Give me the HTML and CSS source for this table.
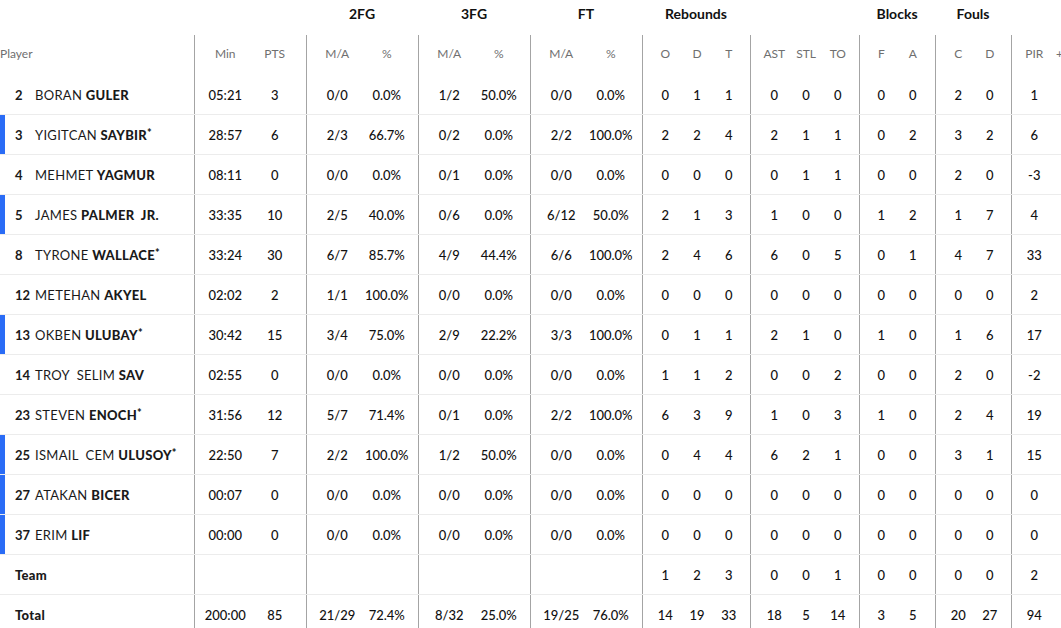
FILE: index.html
```html
<!DOCTYPE html>
<html>
<head>
<meta charset="utf-8">
<link rel="stylesheet" href="styles.css">
</head>
<body>
<table class="box">
  <colgroup>
    <col class="c-player">
    <col class="c-wide"><col class="c-wide">
    <col class="c-wide"><col class="c-wide">
    <col class="c-wide"><col class="c-wide">
    <col class="c-wide"><col class="c-wide">
    <col class="c-39"><col class="c-32"><col class="c-37">
    <col class="c-40"><col class="c-32"><col class="c-37">
    <col class="c-38"><col class="c-38">
    <col class="c-39"><col class="c-37">
    <col class="c-39"><col class="c-11">
  </colgroup>
  <thead>
    <tr class="groups">
      <th></th>
      <th colspan="2"></th>
      <th colspan="2">2FG</th>
      <th colspan="2">3FG</th>
      <th colspan="2">FT</th>
      <th colspan="3">Rebounds</th>
      <th colspan="3"></th>
      <th colspan="2">Blocks</th>
      <th colspan="2">Fouls</th>
      <th colspan="2"></th>
    </tr>
    <tr class="subs">
      <th class="player-head">Player</th>
      <th>Min</th><th>PTS</th>
      <th>M/A</th><th>%</th>
      <th>M/A</th><th>%</th>
      <th>M/A</th><th>%</th>
      <th>O</th><th>D</th><th>T</th>
      <th>AST</th><th>STL</th><th>TO</th>
      <th>F</th><th>A</th>
      <th>C</th><th>D</th>
      <th>PIR</th><th class="pm">+</th>
    </tr>
  </thead>
  <tbody>
    <tr>
      <td class="player"><span class="num">2</span>BORAN <b>GULER</b></td>
      <td>05:21</td><td>3</td><td>0/0</td><td>0.0%</td><td>1/2</td><td>50.0%</td><td>0/0</td><td>0.0%</td>
      <td>0</td><td>1</td><td>1</td><td>0</td><td>0</td><td>0</td><td>0</td><td>0</td><td>2</td><td>0</td><td>1</td><td></td>
    </tr>
    <tr>
      <td class="player starter"><span class="num">3</span>YIGITCAN <b>SAYBIR<sup>*</sup></b></td>
      <td>28:57</td><td>6</td><td>2/3</td><td>66.7%</td><td>0/2</td><td>0.0%</td><td>2/2</td><td>100.0%</td>
      <td>2</td><td>2</td><td>4</td><td>2</td><td>1</td><td>1</td><td>0</td><td>2</td><td>3</td><td>2</td><td>6</td><td></td>
    </tr>
    <tr>
      <td class="player"><span class="num">4</span>MEHMET <b>YAGMUR</b></td>
      <td>08:11</td><td>0</td><td>0/0</td><td>0.0%</td><td>0/1</td><td>0.0%</td><td>0/0</td><td>0.0%</td>
      <td>0</td><td>0</td><td>0</td><td>0</td><td>1</td><td>1</td><td>0</td><td>0</td><td>2</td><td>0</td><td>-3</td><td></td>
    </tr>
    <tr>
      <td class="player starter"><span class="num">5</span>JAMES <b>PALMER&nbsp; JR.</b></td>
      <td>33:35</td><td>10</td><td>2/5</td><td>40.0%</td><td>0/6</td><td>0.0%</td><td>6/12</td><td>50.0%</td>
      <td>2</td><td>1</td><td>3</td><td>1</td><td>0</td><td>0</td><td>1</td><td>2</td><td>1</td><td>7</td><td>4</td><td></td>
    </tr>
    <tr>
      <td class="player"><span class="num">8</span>TYRONE <b>WALLACE<sup>*</sup></b></td>
      <td>33:24</td><td>30</td><td>6/7</td><td>85.7%</td><td>4/9</td><td>44.4%</td><td>6/6</td><td>100.0%</td>
      <td>2</td><td>4</td><td>6</td><td>6</td><td>0</td><td>5</td><td>0</td><td>1</td><td>4</td><td>7</td><td>33</td><td></td>
    </tr>
    <tr>
      <td class="player"><span class="num">12</span>METEHAN <b>AKYEL</b></td>
      <td>02:02</td><td>2</td><td>1/1</td><td>100.0%</td><td>0/0</td><td>0.0%</td><td>0/0</td><td>0.0%</td>
      <td>0</td><td>0</td><td>0</td><td>0</td><td>0</td><td>0</td><td>0</td><td>0</td><td>0</td><td>0</td><td>2</td><td></td>
    </tr>
    <tr>
      <td class="player starter"><span class="num">13</span>OKBEN <b>ULUBAY<sup>*</sup></b></td>
      <td>30:42</td><td>15</td><td>3/4</td><td>75.0%</td><td>2/9</td><td>22.2%</td><td>3/3</td><td>100.0%</td>
      <td>0</td><td>1</td><td>1</td><td>2</td><td>1</td><td>0</td><td>1</td><td>0</td><td>1</td><td>6</td><td>17</td><td></td>
    </tr>
    <tr>
      <td class="player"><span class="num">14</span>TROY&nbsp; SELIM <b>SAV</b></td>
      <td>02:55</td><td>0</td><td>0/0</td><td>0.0%</td><td>0/0</td><td>0.0%</td><td>0/0</td><td>0.0%</td>
      <td>1</td><td>1</td><td>2</td><td>0</td><td>0</td><td>2</td><td>0</td><td>0</td><td>2</td><td>0</td><td>-2</td><td></td>
    </tr>
    <tr>
      <td class="player"><span class="num">23</span>STEVEN <b>ENOCH<sup>*</sup></b></td>
      <td>31:56</td><td>12</td><td>5/7</td><td>71.4%</td><td>0/1</td><td>0.0%</td><td>2/2</td><td>100.0%</td>
      <td>6</td><td>3</td><td>9</td><td>1</td><td>0</td><td>3</td><td>1</td><td>0</td><td>2</td><td>4</td><td>19</td><td></td>
    </tr>
    <tr>
      <td class="player starter"><span class="num">25</span>ISMAIL&nbsp; CEM <b>ULUSOY<sup>*</sup></b></td>
      <td>22:50</td><td>7</td><td>2/2</td><td>100.0%</td><td>1/2</td><td>50.0%</td><td>0/0</td><td>0.0%</td>
      <td>0</td><td>4</td><td>4</td><td>6</td><td>2</td><td>1</td><td>0</td><td>0</td><td>3</td><td>1</td><td>15</td><td></td>
    </tr>
    <tr>
      <td class="player starter"><span class="num">27</span>ATAKAN <b>BICER</b></td>
      <td>00:07</td><td>0</td><td>0/0</td><td>0.0%</td><td>0/0</td><td>0.0%</td><td>0/0</td><td>0.0%</td>
      <td>0</td><td>0</td><td>0</td><td>0</td><td>0</td><td>0</td><td>0</td><td>0</td><td>0</td><td>0</td><td>0</td><td></td>
    </tr>
    <tr>
      <td class="player starter"><span class="num">37</span>ERIM <b>LIF</b></td>
      <td>00:00</td><td>0</td><td>0/0</td><td>0.0%</td><td>0/0</td><td>0.0%</td><td>0/0</td><td>0.0%</td>
      <td>0</td><td>0</td><td>0</td><td>0</td><td>0</td><td>0</td><td>0</td><td>0</td><td>0</td><td>0</td><td>0</td><td></td>
    </tr>
    <tr>
      <td class="player label">Team</td>
      <td></td><td></td><td></td><td></td><td></td><td></td><td></td><td></td>
      <td>1</td><td>2</td><td>3</td><td>0</td><td>0</td><td>1</td><td>0</td><td>0</td><td>0</td><td>0</td><td>2</td><td></td>
    </tr>
    <tr>
      <td class="player label">Total</td>
      <td>200:00</td><td>85</td><td>21/29</td><td>72.4%</td><td>8/32</td><td>25.0%</td><td>19/25</td><td>76.0%</td>
      <td>14</td><td>19</td><td>33</td><td>18</td><td>5</td><td>14</td><td>3</td><td>5</td><td>20</td><td>27</td><td>94</td><td></td>
    </tr>
  </tbody>
</table>
</body>
</html>
```

FILE: styles.css
```css
html, body {
  margin: 0;
  padding: 0;
  background: #ffffff;
  overflow: hidden;
}

body {
  font-family: Lato, "Liberation Sans", sans-serif;
  color: #111111;
}

.box {
  border-collapse: collapse;
  table-layout: fixed;
  width: 1061px;
}

.c-player { width: 194px; }
.c-wide { width: 56px; }
.c-11 { width: 11px; }
.c-32 { width: 32px; }
.c-37 { width: 37px; }
.c-38 { width: 38px; }
.c-39 { width: 39px; }
.c-40 { width: 40px; }

.box th,
.box td {
  padding: 0;
  text-align: center;
  white-space: nowrap;
  overflow: hidden;
}

.groups th {
  height: 35px;
  font-size: 14px;
  font-weight: 700;
  color: #111;
  vertical-align: middle;
  padding-bottom: 9px;
  box-sizing: border-box;
}

.subs th {
  height: 40px;
  font-size: 12px;
  font-weight: 400;
  color: #6f6f6f;
  vertical-align: middle;
  padding-bottom: 4px;
  box-sizing: border-box;
}

.subs th.pm {
  text-align: left;
  padding-left: 6px;
}

.box tbody td {
  height: 39px;
  font-size: 13px;
  font-weight: 500;
  border-bottom: 1px solid #ececec;
}

/* spacing inside column groups */
.subs th:nth-child(2), .box tbody td:nth-child(2),
.subs th:nth-child(4), .box tbody td:nth-child(4),
.subs th:nth-child(6), .box tbody td:nth-child(6),
.subs th:nth-child(8), .box tbody td:nth-child(8),
.subs th:nth-child(16), .box tbody td:nth-child(16) { padding-left: 6px; }

.subs th:nth-child(3), .box tbody td:nth-child(3),
.subs th:nth-child(5), .box tbody td:nth-child(5),
.subs th:nth-child(7), .box tbody td:nth-child(7),
.subs th:nth-child(9), .box tbody td:nth-child(9),
.subs th:nth-child(17), .box tbody td:nth-child(17) { padding-right: 6px; }

.subs th:nth-child(10), .box tbody td:nth-child(10),
.subs th:nth-child(18), .box tbody td:nth-child(18),
.subs th:nth-child(20), .box tbody td:nth-child(20) { padding-left: 7px; }

.subs th:nth-child(13), .box tbody td:nth-child(13) { padding-left: 8px; }

.subs th:nth-child(12), .box tbody td:nth-child(12),
.subs th:nth-child(15), .box tbody td:nth-child(15),
.subs th:nth-child(19), .box tbody td:nth-child(19) { padding-right: 5px; }

/* group dividers */
.subs th:nth-child(2), .box tbody td:nth-child(2),
.subs th:nth-child(4), .box tbody td:nth-child(4),
.subs th:nth-child(6), .box tbody td:nth-child(6),
.subs th:nth-child(8), .box tbody td:nth-child(8),
.subs th:nth-child(10), .box tbody td:nth-child(10),
.subs th:nth-child(13), .box tbody td:nth-child(13),
.subs th:nth-child(16), .box tbody td:nth-child(16),
.subs th:nth-child(18), .box tbody td:nth-child(18),
.subs th:nth-child(20), .box tbody td:nth-child(20) {
  border-left: 1px solid #a4a4a4;
}

.subs .player-head {
  text-align: left;
  padding: 0 0 4px 0;
}

.box tbody td.player {
  text-align: left;
  padding-left: 15px;
  font-weight: 400;
  font-size: 13px;
  color: #1a1a1a;
  letter-spacing: 0.3px;
}

.player .num {
  display: inline-block;
  width: 20px;
  font-weight: 700;
  letter-spacing: 0;
}

.player b {
  font-weight: 900;
}

.player sup {
  font-size: 11px;
  vertical-align: 3px;
  line-height: 0;
}

.player.starter {
  box-shadow: inset 5px 0 0 #2a6cf6;
}

.box tbody td.label {
  font-weight: 900;
}
```
